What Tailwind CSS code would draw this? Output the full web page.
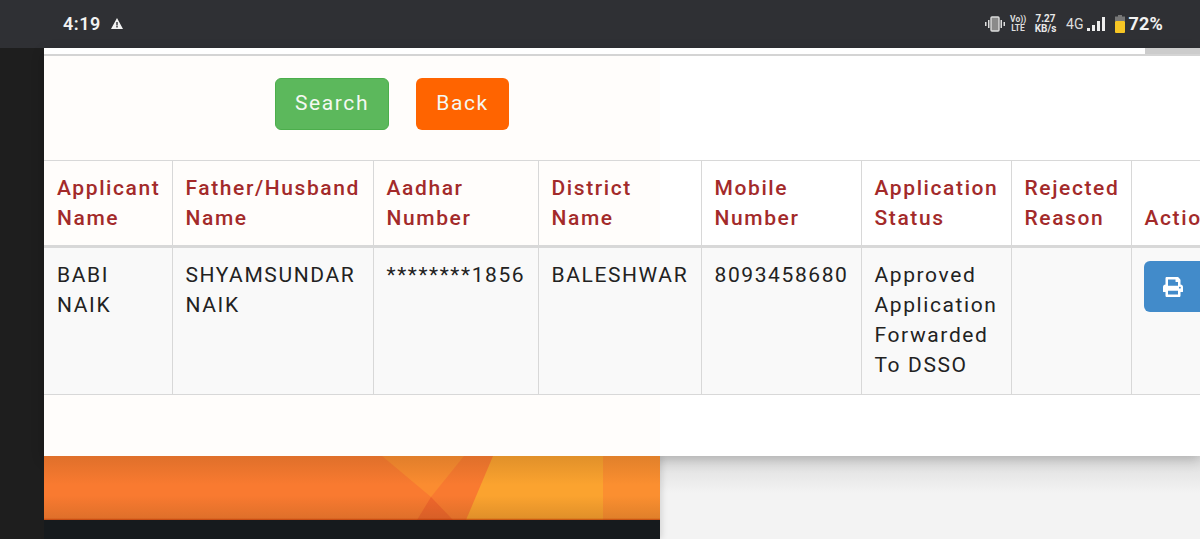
<!DOCTYPE html>
<html>
<head>
<meta charset="utf-8">
<script src="https://cdn.jsdelivr.net/npm/@tailwindcss/browser@4"></script>
</head>
<body class="w-[1200px] h-[539px] overflow-hidden font-['Roboto',sans-serif] bg-[#1e1e1e]">
<div class="h-[48px] bg-[#2f3034] flex items-center justify-between text-[#f2f2f2]">
  <div class="flex items-center pl-[63px] pb-[1px]">
    <span class="text-[18px] font-semibold tracking-[0.5px] leading-none">4:19</span>
    <svg class="ml-[10px] w-[12px] h-[11px]" viewBox="0 0 12 11"><path fill="#f2f2f2" fill-rule="evenodd" d="M6 0 12 11H0ZM5.3 4v3.4h1.4V4ZM5.3 8v1.4h1.4V8Z"/></svg>
  </div>
  <div class="flex items-center pr-[37px]">
    <svg class="w-[20px] h-[16px]" viewBox="0 0 20 16"><rect x="0" y="6" width="1.5" height="4" fill="#ddd"/><rect x="3" y="4" width="1.5" height="8" fill="#ddd"/><rect x="6" y="1" width="8" height="14" rx="1" fill="#8a8a8a" stroke="#ddd" stroke-width="1.4"/><rect x="15.5" y="4" width="1.5" height="8" fill="#ddd"/><rect x="18.500" y="6" width="1.5" height="4" fill="#ddd"/></svg>
    <div class="ml-[5px] w-[16px] text-[8.5px] font-bold leading-[9px] text-center text-[#ddd]">Vo))<br>LTE</div>
    <div class="ml-[8px] w-[23px] text-[10px] font-bold leading-[10px] text-center text-[#e8e8e8]">7.27<br>KB/s</div>
    <span class="ml-[9px] text-[14px] leading-none text-[#ddd]">4G</span>
    <svg class="ml-[4px] w-[18px] h-[16px]" viewBox="0 0 18 16"><rect x="0" y="12" width="3" height="3" fill="#eee"/><rect x="5" y="9" width="3" height="6" fill="#eee"/><rect x="10" y="5" width="3" height="10" fill="#eee"/><rect x="15" y="1" width="3" height="14" fill="#eee"/></svg>
    <svg class="ml-[10px] w-[10px] h-[18px]" viewBox="0 0 10 18"><path fill="#777" d="M3 0h4v1.5h3V6H0V1.500h3Z"/><rect y="6" width="10" height="12" rx="1" fill="#f6c524"/></svg>
    <span class="ml-[3px] text-[18px] font-bold tracking-[0.2px] leading-none">72%</span>
  </div>
</div>
<div class="h-[408px] ml-[44px] overflow-hidden bg-[linear-gradient(90deg,#fffdfb_616px,#ffffff_616px)] shadow-[0_4px_12px_rgba(0,0,0,0.2)] relative">
  <div class="h-[6px] bg-[linear-gradient(90deg,#ffffff_1101px,#cccccc_1101px)]"></div>
  <div class="h-[2px] bg-[#d4d4d4]"></div>
  <div class="h-[104px] pt-[22px] flex pl-[231px] gap-[27px] text-[21px] tracking-[1.6px] text-[#f4f8f2]">
    <button class="w-[114px] h-[52px] bg-[#5cb85c] border border-[#4cae4c] rounded-[6px]">Search</button>
    <button class="w-[93px] h-[52px] bg-[#ff6400] rounded-[6px]">Back</button>
  </div>
  <table class="table-fixed border-collapse w-[1217px] text-[21px] leading-[30px] tracking-[1.6px] text-[#222]">
    <colgroup>
      <col class="w-[128px]"><col class="w-[201px]"><col class="w-[165px]"><col class="w-[163px]"><col class="w-[160px]"><col class="w-[150px]"><col class="w-[120px]"><col class="w-[130px]">
    </colgroup>
    <thead>
      <tr class="text-[#a32a2a] text-left">
        <th class="font-medium align-bottom py-[12px] pl-[13px] pr-[11px] border border-[#d8d8d8] border-b-[3px] border-l-0">Applicant Name</th>
        <th class="font-medium align-bottom py-[12px] pl-[13px] pr-[11px] border border-[#d8d8d8] border-b-[3px]">Father/Husband Name</th>
        <th class="font-medium align-bottom py-[12px] pl-[13px] pr-[11px] border border-[#d8d8d8] border-b-[3px]">Aadhar Number</th>
        <th class="font-medium align-bottom py-[12px] pl-[13px] pr-[11px] border border-[#d8d8d8] border-b-[3px]">District Name</th>
        <th class="font-medium align-bottom py-[12px] pl-[13px] pr-[11px] border border-[#d8d8d8] border-b-[3px]">Mobile Number</th>
        <th class="font-medium align-bottom py-[12px] pl-[13px] pr-[11px] border border-[#d8d8d8] border-b-[3px]">Application Status</th>
        <th class="font-medium align-bottom py-[12px] pl-[13px] pr-[11px] border border-[#d8d8d8] border-b-[3px]">Rejected Reason</th>
        <th class="font-medium align-bottom py-[12px] pl-[13px] pr-[11px] border border-[#d8d8d8] border-b-[3px]">Action</th>
      </tr>
    </thead>
    <tbody>
      <tr class="bg-[#f9f9f9]">
        <td class="align-top pt-[12px] pb-[14px] pl-[13px] pr-[11px] border border-[#d8d8d8] border-l-0">BABI NAIK</td>
        <td class="align-top pt-[12px] pb-[14px] pl-[13px] pr-[11px] border border-[#d8d8d8]">SHYAMSUNDAR NAIK</td>
        <td class="align-top pt-[12px] pb-[14px] pl-[13px] pr-[11px] border border-[#d8d8d8]">********1856</td>
        <td class="align-top pt-[12px] pb-[14px] pl-[13px] pr-[11px] border border-[#d8d8d8]">BALESHWAR</td>
        <td class="align-top pt-[12px] pb-[14px] pl-[13px] pr-[11px] border border-[#d8d8d8]">8093458680</td>
        <td class="align-top pt-[12px] pb-[14px] pl-[13px] pr-[11px] border border-[#d8d8d8]">Approved Application Forwarded To DSSO</td>
        <td class="align-top pt-[12px] pb-[14px] pl-[13px] pr-[11px] border border-[#d8d8d8]"></td>
        <td class="align-top pt-[13px] pb-[14px] pl-[12px] pr-[11px] border border-[#d8d8d8]">
          <button class="w-[70px] h-[51px] bg-[#428bca] rounded-[6px] flex items-center pl-[19px]">
            <svg class="w-[20px] h-[20px]" viewBox="0 0 512 512"><path fill="#fff" d="M448 192V77.25c0-8.49-3.37-16.62-9.37-22.63L393.37 9.37c-6-6-14.14-9.37-22.63-9.37H96C78.33 0 64 14.33 64 32v160c-35.35 0-64 28.65-64 64v112c0 8.84 7.16 16 16 16h48v96c0 17.67 14.33 32 32 32h320c17.67 0 32-14.33 32-32v-96h48c8.84 0 16-7.16 16-16V256c0-35.35-28.65-64-64-64zm-64 256H128v-96h256v96zm0-224H128V64h192v48c0 8.84 7.16 16 16 16h48v96zm48 72c-13.25 0-24-10.75-24-24 0-13.26 10.75-24 24-24s24 10.74 24 24c0 13.25-10.75 24-24 24z"/></svg>
          </button>
        </td>
      </tr>
    </tbody>
  </table>
</div>
<div class="h-[83px] ml-[44px] flex bg-[linear-gradient(180deg,#dcdcdc,#f3f3f3_45%,#f3f3f3)]">
  <div class="w-[616px] shrink-0 flex flex-col shadow-[2px_0_6px_rgba(0,0,0,0.12)]">
    <div class="relative h-[64px] bg-[#f97a30]">
      <svg class="absolute inset-0 w-[616px] h-[64px]" viewBox="0 0 616 64" preserveAspectRatio="none">
        <path fill="#fb8c30" d="M338 0H420L387 41Z"/>
        <path fill="#f0662c" d="M387 41 409 64H373Z"/>
        <path fill="#fba32f" d="M449 0H559V64H422Z"/>
        <path fill="#fb8f30" d="M559 0H616V64H559Z"/>
      </svg>
      <div class="absolute inset-0 bg-[linear-gradient(180deg,rgba(120,70,20,0.2),rgba(120,70,20,0)_45%,rgba(120,70,20,0)_62%,rgba(120,70,20,0.2)_97%,rgba(180,50,0,0.8)_100%)]"></div>
    </div>
    <div class="flex-1 bg-[#161a1d]"></div>
  </div>
</div>
</body>
</html>
